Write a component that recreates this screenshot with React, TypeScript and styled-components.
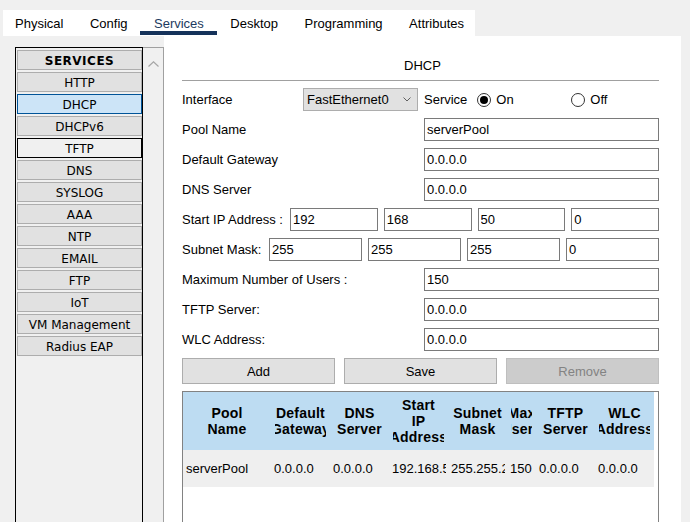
import React from "react";
import styled, { createGlobalStyle } from "styled-components";

const GlobalStyle = createGlobalStyle`
  html, body { margin: 0; padding: 0; background: #f0f0f0; }
  body { font-family: "Liberation Sans", Arial, sans-serif; font-size: 13px; color: #000; }
  * { box-sizing: border-box; }
`;

const Page = styled.div`
  width: 690px;
  height: 522px;
  overflow: hidden;
  display: flex;
  flex-direction: column;
  background: #f0f0f0;
`;

const TabBar = styled.div`
  margin: 10px 0 0 3px;
  width: 472px;
  height: 26px;
  flex: 0 0 26px;
  background: #fff;
  display: flex;
  padding-left: 12px;
  gap: 26.5px;
`;

const Tab = styled.div<{ $active?: boolean }>`
  position: relative;
  padding-top: 6px;
  line-height: 16px;
  white-space: nowrap;
  color: ${(p) => (p.$active ? "#1c3a60" : "#000")};
  &::after {
    content: "";
    display: ${(p) => (p.$active ? "block" : "none")};
    position: absolute;
    left: -14px;
    right: -13px;
    top: 21px;
    height: 4px;
    background: #15325a;
  }
`;

const Main = styled.div`
  flex: 1;
  display: flex;
  min-height: 0;
`;

const LeftPanel = styled.div`
  width: 164px;
  flex: 0 0 164px;
  padding: 11px 0 0 15px;
  display: flex;
  background: #f0f0f0;
`;

const ListBox = styled.div`
  width: 128px;
  border: 1px solid #000;
  border-bottom: none;
  background: #f0f0f0;
  display: flex;
  flex-direction: column;
  gap: 2px;
  padding: 2px 0 0 1px;
`;

type ItemState = "normal" | "selected" | "focused" | "header";

const ListItem = styled.div<{ $state: ItemState }>`
  width: 125px;
  height: 20px;
  flex: 0 0 20px;
  display: flex;
  align-items: center;
  justify-content: center;
  padding-top: 1px;
  font-family: "DejaVu Sans", Verdana, sans-serif;
  font-size: 12px;
  font-weight: ${(p) => (p.$state === "header" ? 700 : 400)};
  letter-spacing: ${(p) => (p.$state === "header" ? "0.5px" : "0")};
  color: #000;
  white-space: nowrap;
  border: 1px solid
    ${(p) =>
      p.$state === "selected" ? "#005499" : p.$state === "focused" ? "#000" : "#adadad"};
  background: ${(p) =>
    p.$state === "selected" ? "#cce4f7" : p.$state === "focused" ? "#f0f0f0" : "#e1e1e1"};
`;

const ScrollBar = styled.div`
  width: 21px;
  border-top: 1px solid #a0a0a0;
  border-right: 1px solid #a0a0a0;
  background: #f0f0f0;
  display: flex;
  justify-content: center;
  padding-top: 7px;
`;

const RightPanel = styled.div`
  width: 517px;
  flex: 0 0 517px;
  background: #fff;
  display: flex;
  flex-direction: column;
`;

const Title = styled.div`
  height: 44px;
  flex: 0 0 44px;
  padding-top: 22px;
  line-height: 16px;
  text-align: center;
`;

const Body = styled.div`
  flex: 1;
  padding: 0 22px 0 18px;
  display: flex;
  flex-direction: column;
  min-height: 0;
`;

const Divider = styled.div`
  height: 1px;
  flex: 0 0 1px;
  background: #a0a0a0;
`;

const Form = styled.div`
  margin-top: 7px;
  display: flex;
  flex-direction: column;
  gap: 7px;
`;

const Row = styled.div`
  height: 23px;
  display: flex;
  align-items: center;
`;

const Label = styled.div<{ $w: number }>`
  width: ${(p) => p.$w}px;
  flex: 0 0 ${(p) => p.$w}px;
  white-space: nowrap;
`;

const Inputs = styled.div`
  flex: 1;
  min-width: 0;
  display: flex;
  gap: 6px;
  height: 23px;
`;

const TextInput = styled.input`
  flex: 1 1 0;
  width: 0;
  min-width: 0;
  height: 23px;
  border: 1px solid #7a7a7a;
  padding: 0 2px;
  font-family: "Liberation Sans", Arial, sans-serif;
  font-size: 13px;
  color: #000;
  background: #fff;
  outline: none;
  border-radius: 0;
`;

const Select = styled.div`
  width: 115px;
  flex: 0 0 115px;
  height: 23px;
  background: #e1e1e1;
  border: 1px solid #adadad;
  display: flex;
  align-items: center;
  justify-content: space-between;
  padding: 0 6px 0 3px;
`;

const ServiceText = styled.span`
  margin-left: 6px;
`;

const RadioOption = styled.div<{ $w?: number }>`
  display: flex;
  align-items: center;
  gap: 5px;
  margin-left: ${(p) => (p.$w ? "10px" : "0")};
  width: ${(p) => (p.$w ? `${p.$w}px` : "auto")};
`;

const Radio = styled.span<{ $checked?: boolean }>`
  width: 14px;
  height: 14px;
  border: 1px solid #333;
  border-radius: 50%;
  background: #fff;
  display: flex;
  align-items: center;
  justify-content: center;
  &::after {
    content: "";
    display: ${(p) => (p.$checked ? "block" : "none")};
    width: 8px;
    height: 8px;
    border-radius: 50%;
    background: #000;
  }
`;

const ButtonRow = styled.div`
  display: flex;
  gap: 9px;
  height: 26px;
`;

const Button = styled.div<{ $disabled?: boolean }>`
  flex: 1;
  height: 26px;
  display: flex;
  align-items: center;
  justify-content: center;
  border: 1px solid ${(p) => (p.$disabled ? "#bfbfbf" : "#adadad")};
  background: ${(p) => (p.$disabled ? "#cccccc" : "#e1e1e1")};
  color: ${(p) => (p.$disabled ? "#838383" : "#000")};
`;

const Table = styled.div`
  margin-top: 7px;
  flex: 1;
  border: 1px solid #828282;
  border-bottom: none;
  background: #fff;
  display: flex;
  flex-direction: column;
`;

const HeaderRow = styled.div`
  display: flex;
  height: 58px;
  flex: 0 0 58px;
  width: 471px;
  background: #bddcf2;
`;

const HeaderCell = styled.div<{ $w: number }>`
  width: ${(p) => p.$w}px;
  flex: 0 0 ${(p) => p.$w}px;
  padding: 0 4px;
  display: flex;
  flex-direction: column;
  justify-content: center;
  font-weight: 700;
  font-size: 14px;
  letter-spacing: 0.2px;
`;

const HeaderLine = styled.div`
  display: flex;
  justify-content: center;
  overflow: hidden;
  white-space: nowrap;
  line-height: 16px;
`;

const DataRow = styled.div`
  display: flex;
  height: 37px;
  flex: 0 0 37px;
  width: 471px;
  background: #efefef;
  align-items: center;
`;

const DataCell = styled.div<{ $w: number }>`
  width: ${(p) => p.$w - 2}px;
  flex: 0 0 ${(p) => p.$w - 2}px;
  margin-right: 2px;
  padding-left: 3px;
  overflow: hidden;
  white-space: nowrap;
`;

const Chevron = ({ up }: { up?: boolean }) =>
  up ? (
    <svg width="11" height="6" viewBox="0 0 11 6">
      <polyline points="0.5,5.5 5.5,0.8 10.5,5.5" fill="none" stroke="#a6a6a6" strokeWidth="1.2" />
    </svg>
  ) : (
    <svg width="8" height="5" viewBox="0 0 8 5">
      <polyline points="0.5,0.5 4,4 7.5,0.5" fill="none" stroke="#606060" strokeWidth="1" />
    </svg>
  );

const services: { name: string; state: ItemState }[] = [
  { name: "SERVICES", state: "header" },
  { name: "HTTP", state: "normal" },
  { name: "DHCP", state: "selected" },
  { name: "DHCPv6", state: "normal" },
  { name: "TFTP", state: "focused" },
  { name: "DNS", state: "normal" },
  { name: "SYSLOG", state: "normal" },
  { name: "AAA", state: "normal" },
  { name: "NTP", state: "normal" },
  { name: "EMAIL", state: "normal" },
  { name: "FTP", state: "normal" },
  { name: "IoT", state: "normal" },
  { name: "VM Management", state: "normal" },
  { name: "Radius EAP", state: "normal" },
];

const columns: { w: number; head: string[]; value: string }[] = [
  { w: 88, head: ["Pool", "Name"], value: "serverPool" },
  { w: 59, head: ["Default", "Gateway"], value: "0.0.0.0" },
  { w: 59, head: ["DNS", "Server"], value: "0.0.0.0" },
  { w: 59, head: ["Start", "IP", "Address"], value: "192.168.50.0" },
  { w: 59, head: ["Subnet", "Mask"], value: "255.255.255.0" },
  { w: 29, head: ["Max", "Users"], value: "150" },
  { w: 59, head: ["TFTP", "Server"], value: "0.0.0.0" },
  { w: 59, head: ["WLC", "Address"], value: "0.0.0.0" },
];

const tabs = ["Physical", "Config", "Services", "Desktop", "Programming", "Attributes"];

const singleRows: { label: string; value: string }[] = [
  { label: "Pool Name", value: "serverPool" },
  { label: "Default Gateway", value: "0.0.0.0" },
  { label: "DNS Server", value: "0.0.0.0" },
];

const lowerRows: { label: string; value: string }[] = [
  { label: "Maximum Number of Users :", value: "150" },
  { label: "TFTP Server:", value: "0.0.0.0" },
  { label: "WLC Address:", value: "0.0.0.0" },
];

export default function App() {
  return (
    <>
      <GlobalStyle />
      <Page>
        <TabBar>
          {tabs.map((t) => (
            <Tab key={t} $active={t === "Services"}>
              {t}
            </Tab>
          ))}
        </TabBar>
        <Main>
          <LeftPanel>
            <ListBox>
              {services.map((s) => (
                <ListItem key={s.name} $state={s.state}>
                  {s.name}
                </ListItem>
              ))}
            </ListBox>
            <ScrollBar>
              <div>
                <Chevron up />
              </div>
            </ScrollBar>
          </LeftPanel>
          <RightPanel>
            <Title>DHCP</Title>
            <Body>
              <Divider />
              <Form>
                <Row>
                  <Label $w={121}>Interface</Label>
                  <Select>
                    <span>FastEthernet0</span>
                    <Chevron />
                  </Select>
                  <ServiceText>Service</ServiceText>
                  <RadioOption $w={94}>
                    <Radio $checked />
                    <span>On</span>
                  </RadioOption>
                  <RadioOption>
                    <Radio />
                    <span>Off</span>
                  </RadioOption>
                </Row>
                {singleRows.map((r) => (
                  <Row key={r.label}>
                    <Label $w={242}>{r.label}</Label>
                    <Inputs>
                      <TextInput readOnly value={r.value} />
                    </Inputs>
                  </Row>
                ))}
                <Row>
                  <Label $w={108}>Start IP Address :</Label>
                  <Inputs>
                    {["192", "168", "50", "0"].map((v, i) => (
                      <TextInput key={i} readOnly value={v} />
                    ))}
                  </Inputs>
                </Row>
                <Row>
                  <Label $w={87}>Subnet Mask:</Label>
                  <Inputs>
                    {["255", "255", "255", "0"].map((v, i) => (
                      <TextInput key={i} readOnly value={v} />
                    ))}
                  </Inputs>
                </Row>
                {lowerRows.map((r) => (
                  <Row key={r.label}>
                    <Label $w={242}>{r.label}</Label>
                    <Inputs>
                      <TextInput readOnly value={r.value} />
                    </Inputs>
                  </Row>
                ))}
                <ButtonRow>
                  <Button>Add</Button>
                  <Button>Save</Button>
                  <Button $disabled>Remove</Button>
                </ButtonRow>
              </Form>
              <Table>
                <HeaderRow>
                  {columns.map((c, i) => (
                    <HeaderCell key={i} $w={c.w}>
                      {c.head.map((h) => (
                        <HeaderLine key={h}>{h}</HeaderLine>
                      ))}
                    </HeaderCell>
                  ))}
                </HeaderRow>
                <DataRow>
                  {columns.map((c, i) => (
                    <DataCell key={i} $w={c.w}>
                      {c.value}
                    </DataCell>
                  ))}
                </DataRow>
              </Table>
            </Body>
          </RightPanel>
        </Main>
      </Page>
    </>
  );
}
